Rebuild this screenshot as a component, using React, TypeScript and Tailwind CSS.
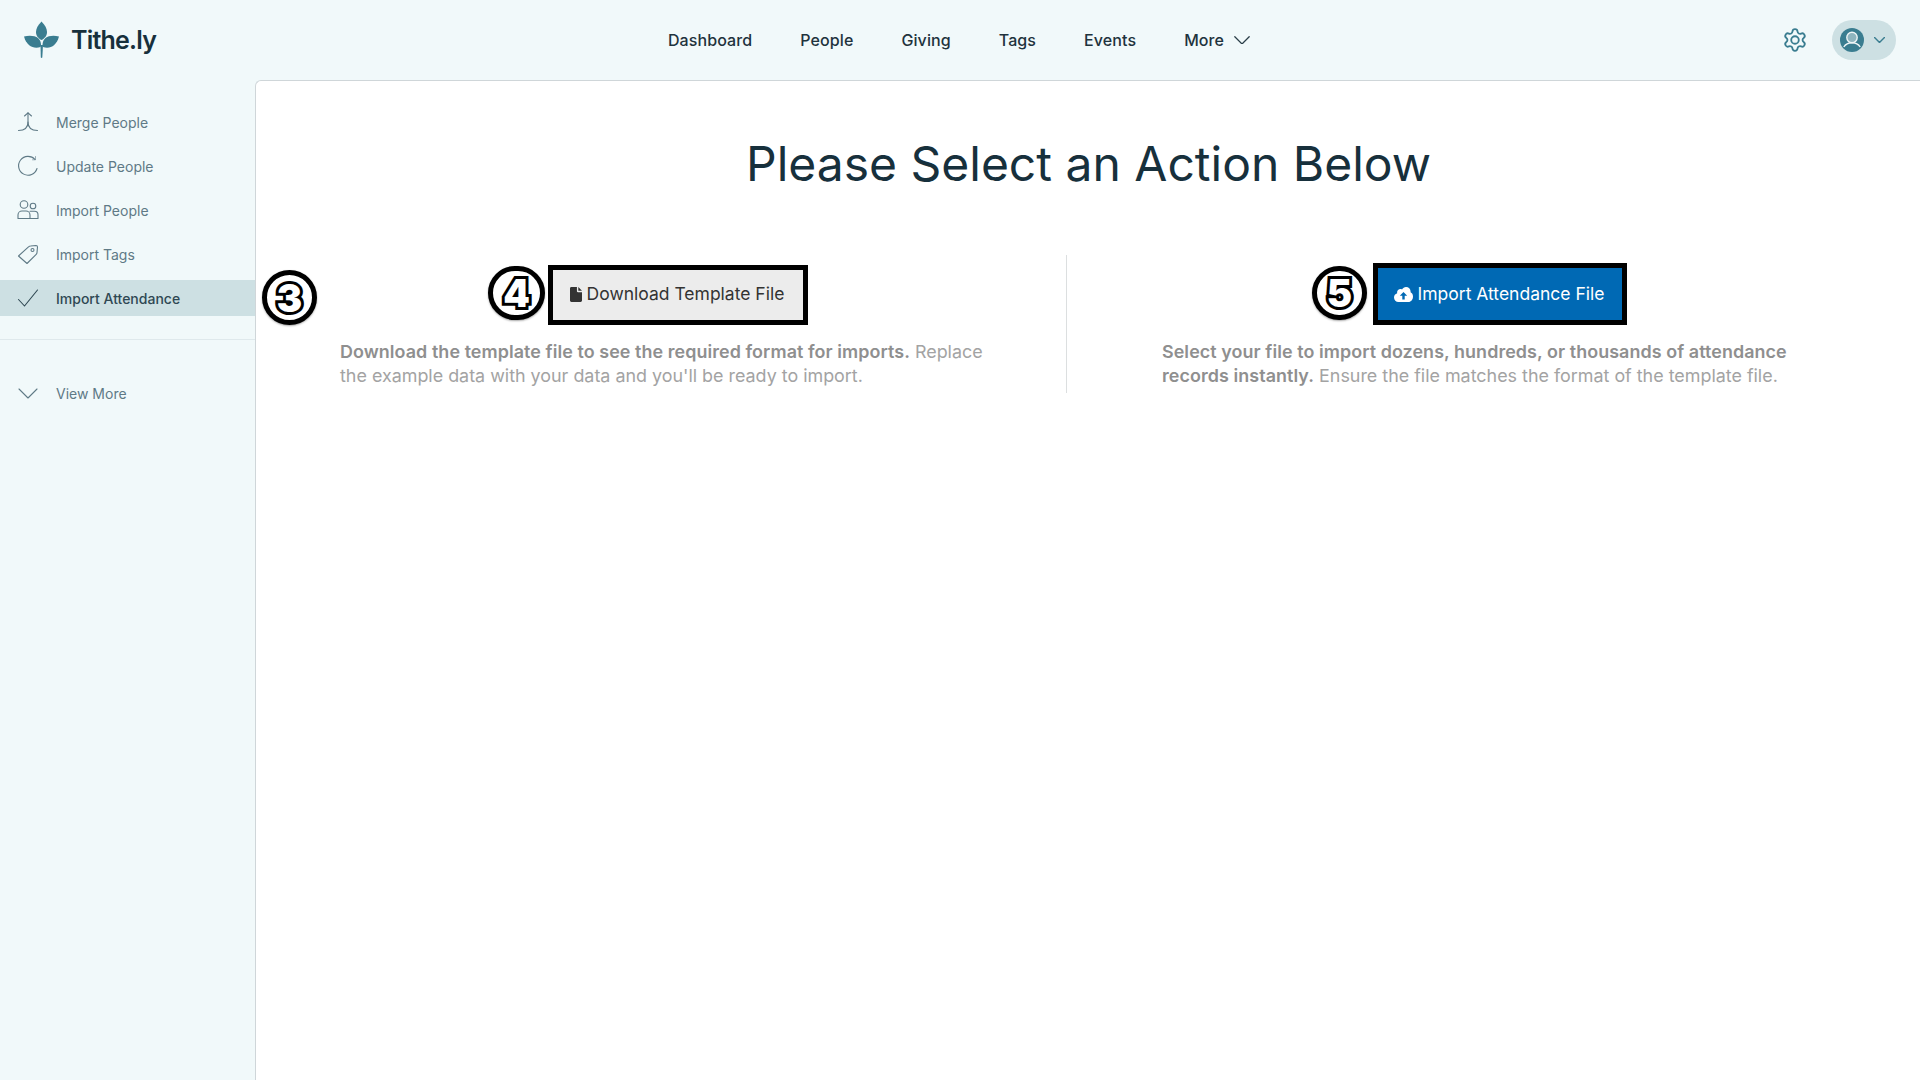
import React from "react";

const font = { fontFamily: "Inter, 'Noto Sans', sans-serif" };

function Logo() {
  return (
    <svg width="36" height="38" viewBox="0 0 36 38" fill="#3a7d90">
      <path d="M17.5 0.5C21 4 23 7.5 23 11C23 15 20.5 17.5 17.5 19C14.5 17.5 12 15 12 11C12 7.5 14 4 17.5 0.5Z" />
      <path d="M0 15.5C5.5 14 11 14.7 14 17C16 18.8 17 21 17 24C17 25 16.5 26 16.5 26C10 28.5 2.5 25 0 15.5Z" />
      <path d="M35 15.5C29.5 14 24.500 14.700 21.500 17C19.500 18.800 18.500 21 18.500 24C18.500 25 19 26 19 26C25.500 28.500 32.500 25 35 15.500Z" />
      <path d="M16.500 24H19L18.300 36.500L17.500 37L16.800 36.500Z" />
    </svg>
  );
}

const iconProps = {
  width: 22,
  height: 22,
  viewBox: "0 0 22 22",
  fill: "none",
  strokeWidth: 1.1,
  strokeLinecap: "round" as const,
  strokeLinejoin: "round" as const,
};

function MergeIcon() {
  return (
    <svg {...iconProps} stroke="#5f7a86">
      <path d="M7.500 5L11 1.800L14.500 5" />
      <path d="M11 1.800V11C11 16 8 19.500 1.500 19.500" />
      <path d="M11 11C11 16 14 19.500 20.500 19.500" />
    </svg>
  );
}
function UpdateIcon() {
  return (
    <svg {...iconProps} stroke="#5f7a86">
      <path d="M20 13.500A9.400 9.400 0 1 1 18 4.500" />
      <path d="M18.500 1.500V4.800H15.500" strokeWidth="0.6" />
    </svg>
  );
}
function PeopleIcon() {
  return (
    <svg {...iconProps} stroke="#5f7a86">
      <circle cx="7" cy="5.500" r="3.800" />
      <circle cx="16" cy="7" r="2.800" />
      <path d="M1 19.500V16C1 13.500 3 12 5 12H9C11 12 13 13.500 13 16V19.500Z" />
      <path d="M13 12.300H17.500C19.500 12.300 21 13.800 21 15.800V19.500H13" />
    </svg>
  );
}
function TagIcon() {
  return (
    <svg {...iconProps} stroke="#5f7a86">
      <path d="M1.500 13L11.500 3.800C12 3.300 12.700 3 13.500 3L19 2.500C20 2.500 20.500 3 20.500 4L20 9.500C20 10.200 19.700 10.900 19.200 11.400L10 20.500L1.500 13Z" />
      <circle cx="15.500" cy="7" r="1.500" />
    </svg>
  );
}
function CheckIcon() {
  return (
    <svg {...iconProps} stroke="#2f4853">
      <path d="M1.500 12.500L7.500 19L20.500 3" />
    </svg>
  );
}
function ThinChevron({ w = 20, color = "#5f7a86", sw = 1.1 }: { w?: number; color?: string; sw?: number }) {
  return (
    <svg width={w} height={w * 0.55} viewBox="0 0 20 11" fill="none" stroke={color} strokeWidth={sw} strokeLinecap="round" strokeLinejoin="round">
      <path d="M1 1L10 10L19 1" />
    </svg>
  );
}

function Gear() {
  return (
    <svg width="26" height="26" viewBox="0 0 24 24" fill="none" stroke="#3a7d90" strokeWidth="1.7" strokeLinecap="round" strokeLinejoin="round">
      <path d="M9.671 4.136a2.34 2.34 0 0 1 4.659 0 2.34 2.34 0 0 0 3.319 1.915 2.34 2.34 0 0 1 2.33 4.033 2.34 2.34 0 0 0 0 3.831 2.34 2.34 0 0 1-2.33 4.033 2.34 2.34 0 0 0-3.319 1.915 2.34 2.34 0 0 1-4.659 0 2.34 2.34 0 0 0-3.32-1.915 2.34 2.34 0 0 1-2.33-4.033 2.34 2.34 0 0 0 0-3.831A2.34 2.34 0 0 1 6.35 6.051a2.34 2.34 0 0 0 3.319-1.915" />
      <circle cx="12" cy="12" r="3.500" />
    </svg>
  );
}

function Avatar() {
  return (
    <svg width="24" height="24" viewBox="0 0 24 24">
      <circle cx="12" cy="12" r="12" fill="#3a7d90" />
      <circle cx="12" cy="9.500" r="5.200" fill="#8fb5bf" stroke="#eef5f6" strokeWidth="1.400" />
      <path d="M3.800 19C6 15.500 8.500 14.800 12 14.800C15.500 14.800 18 15.500 20.200 19" fill="none" stroke="#eef5f6" strokeWidth="1.400" />
    </svg>
  );
}

function Badge({ n, className }: { n: string; className: string }) {
  return (
    <div
      className={`absolute flex items-center justify-center rounded-full border-[5px] border-black bg-white shadow-[0_1px_2px_rgba(0,0,0,0.35)] ${className}`}
    >
      <span className="text-[38px] leading-none font-black text-white [-webkit-text-stroke:6px_#000] [paint-order:stroke_fill]">{n}</span>
    </div>
  );
}

const sideItems = [
  { label: "Merge People", icon: <MergeIcon /> },
  { label: "Update People", icon: <UpdateIcon /> },
  { label: "Import People", icon: <PeopleIcon /> },
  { label: "Import Tags", icon: <TagIcon /> },
];

export default function App() {
  return (
    <div style={font} className="flex h-[1080px] w-[1920px] flex-col overflow-hidden bg-[#f1f9fa]">
      <header className="relative flex h-[80px] shrink-0 items-center justify-center">
        <div className="absolute left-[24px] top-[21px] flex items-center gap-[11px]">
          <Logo />
          <span className="text-[25px] leading-none font-semibold tracking-[-0.8px] text-[#17303c]">Tithe.ly</span>
        </div>
        <nav className="mr-[2px] flex items-center gap-[48px] text-[16px] font-medium tracking-[0.1px] text-[#1f333d]">
          <span>Dashboard</span>
          <span>People</span>
          <span>Giving</span>
          <span>Tags</span>
          <span>Events</span>
          <span className="flex items-center gap-[10px]">
            More
            <ThinChevron w={16} color="#2a3e48" sw={1.6} />
          </span>
        </nav>
        <div className="absolute right-[24px] top-[20px] flex items-center gap-[24px]">
          <Gear />
          <div className="flex h-[40px] w-[64px] items-center gap-[10px] rounded-full bg-[#cde0e3] pl-[8px]">
            <Avatar />
            <ThinChevron w={11} color="#3a7d90" sw={2.6} />
          </div>
        </div>
      </header>

      <div className="flex min-h-0 flex-1">
        <aside className="w-[255px] shrink-0 pt-[24px] text-[14px] text-[#5f7a86]">
          <div className="flex flex-col gap-[8px]">
            {sideItems.map((s) => (
              <div key={s.label} className="flex h-[36px] items-center gap-[17px] pl-[17px]">
                {s.icon}
                <span>{s.label}</span>
              </div>
            ))}
            <div className="flex h-[36px] items-center gap-[17px] bg-[#cde0e3] pl-[17px] font-medium text-[#2f4853]">
              <CheckIcon />
              <span>Import Attendance</span>
            </div>
          </div>
          <div className="mt-[23px] border-t border-[#dfe9ec]" />
          <div className="mt-[35px] flex h-[36px] items-center gap-[17px] pl-[17px]">
            <span className="flex w-[22px] justify-center">
              <ThinChevron w={20} />
            </span>
            <span>View More</span>
          </div>
        </aside>

        <main className="relative flex-1 rounded-tl-[6px] border-t border-l border-[#cfd6d9] bg-white">
          <h1 className="mt-[51px] text-center text-[48px] leading-[64px] font-normal text-[#17303c]">
            Please Select an Action Below
          </h1>
          <Badge n="3" className="left-[6px] top-[189px] h-[55px] w-[55px]" />
          <div className="mt-[59px] flex">
            <section className="h-[138px] w-[810px] pl-[84px]">
              <div className="flex w-[676px] justify-center pt-[10px]">
                <div className="relative">
                  <Badge n="4" className="left-[-60px] top-[1px] h-[54px] w-[57px]" />
                  <button className="flex h-[60px] w-[260px] items-center justify-center gap-[5px] border-[5px] border-black bg-[#ececec] pr-[2px] pb-[2px] text-[17.5px] text-[#333]">
                    <svg width="12" height="15" viewBox="0 0 13 16" fill="#333">
                      <path d="M0 1.500C0 .7.7 0 1.500 0H7.500V4.500C7.500 5 8 5.500 8.500 5.500H13V14.500C13 15.300 12.300 16 11.500 16H1.500C.7 16 0 15.300 0 14.500Z" />
                      <path d="M9 0L13 4H9Z" />
                    </svg>
                    Download Template File
                  </button>
                </div>
              </div>
              <p className="mt-[15px] w-[660px] text-[17.9px] leading-[24px] text-[#a3a3a3]">
                <strong className="font-semibold tracking-[0.08px] text-[#8f8f8f]">Download the template file to see the required format for imports.</strong> Replace the example data with your data and you'll be ready to import.
              </p>
            </section>
            <section className="h-[138px] w-[855px] border-l border-[#dcdfe0] pl-[95px]">
              <div className="flex w-[676px] justify-center pt-[8px]">
                <div className="relative">
                  <Badge n="5" className="left-[-61px] top-[3px] h-[54px] w-[55px]" />
                  <button className="flex h-[62px] w-[254px] items-center justify-center gap-[5px] border-[5px] border-black bg-[#0069b4] pr-[2px] text-[17.5px] text-white">
                    <svg width="19" height="15" viewBox="0 0 19 15" fill="#fff">
                      <path fillRule="evenodd" d="M4.500 15C2 15 0 13 0 10.500C0 8.500 1.300 6.800 3.200 6.200C3.100 5.900 3.100 5.700 3.100 5.400C3.100 3.500 4.600 2 6.500 2C7 2 7.500 2.100 8 2.400C8.900 1 10.300 0 12 0C14.600 0 16.600 2 16.600 4.500V5.300C18 6 19 7.500 19 9.500C19 12.500 17 15 14.500 15ZM9.500 5L5.800 8.700H8.300V12.500H10.700V8.700H13.200Z" />
                    </svg>
                    Import Attendance File
                  </button>
                </div>
              </div>
              <p className="mt-[15px] w-[660px] text-[17.9px] leading-[24px] text-[#a3a3a3]">
                <strong className="font-semibold tracking-[0.08px] text-[#8f8f8f]">Select your file to import dozens, hundreds, or thousands of attendance records instantly.</strong> Ensure the file matches the format of the template file.
              </p>
            </section>
          </div>
        </main>
      </div>
    </div>
  );
}
